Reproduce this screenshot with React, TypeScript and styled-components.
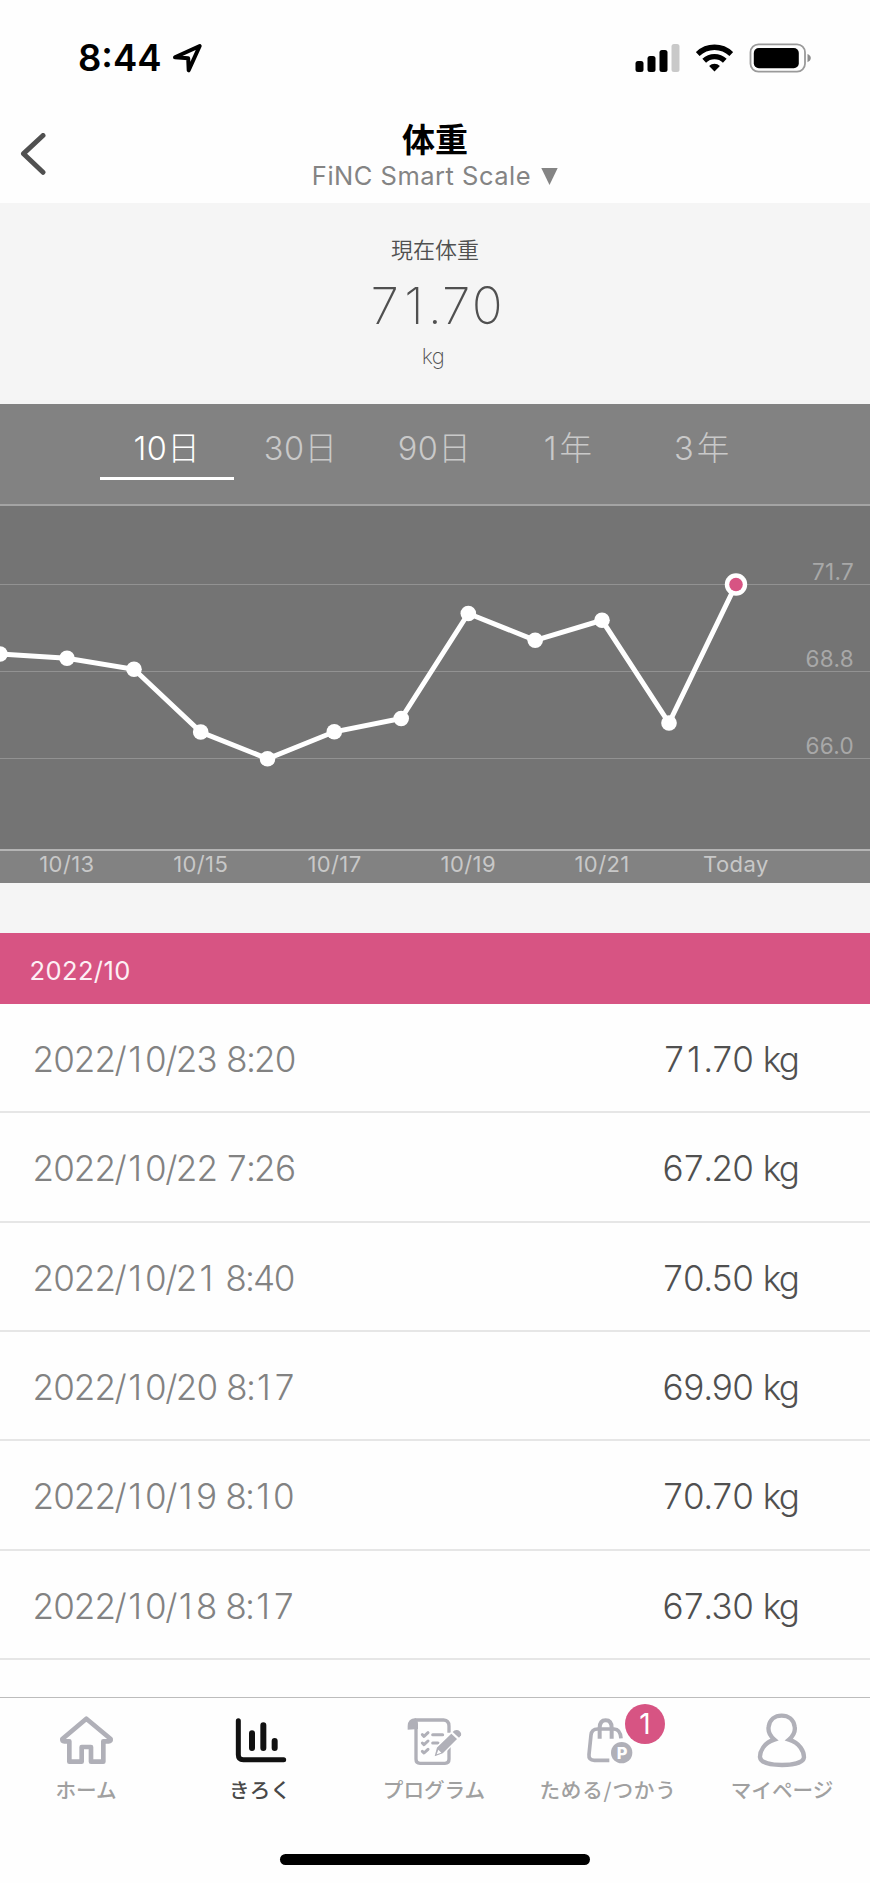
import React from 'react';
import styled, { createGlobalStyle } from 'styled-components';

const PINK = '#d75483';
const ICON_GREY = '#b0b0b8';

const GlobalStyle = createGlobalStyle`
  *, *::before, *::after { box-sizing: border-box; }
  body {
    margin: 0;
    background: #fff;
    font-family: Inter, "Noto Sans CJK JP", sans-serif;
  }
  svg { display: block; flex: none; }
`;

const Screen = styled.div`
  display: flex;
  flex-direction: column;
  width: 870px;
  height: 1883px;
  background: #fefefe;
  overflow: hidden;
`;

/* ---- status bar and title ---- */

const StatusBar = styled.div`
  display: flex;
  justify-content: space-between;
  align-items: center;
  height: 115px;
  padding: 1px 59px 0 78px;
`;

const Clock = styled.div`
  display: flex;
  align-items: center;
  gap: 10px;
  font-size: 36.5px;
  font-weight: 600;
  letter-spacing: 0;
  color: #000;
`;

const StatusIcons = styled.div`
  display: flex;
  align-items: center;
  gap: 16px;
`;

const NavHeader = styled.header`
  display: grid;
  grid-template-columns: 100px 1fr 100px;
  height: 88px;
`;

const BackButton = styled.button`
  display: flex;
  align-items: flex-start;
  padding: 18px 0 0 20px;
  border: 0;
  background: none;
`;

const TitleBlock = styled.div`
  display: flex;
  flex-direction: column;
  align-items: center;
`;

const Title = styled.h1`
  margin: 0;
  padding-top: 6px;
  font-size: 33px;
  font-weight: 600;
  line-height: 38px;
  color: #000;
`;

const Device = styled.div`
  display: flex;
  align-items: center;
  gap: 10px;
  font-size: 25.5px;
  line-height: 34px;
  letter-spacing: 0.5px;
  color: #848484;
`;

/* ---- current weight ---- */

const Summary = styled.section`
  display: flex;
  flex-direction: column;
  align-items: center;
  height: 201px;
  padding-top: 31px;
  background: #f5f5f5;
  color: #505050;
`;

const SummaryLabel = styled.div`
  font-size: 22px;
  font-weight: 350;
  line-height: 32px;
`;

const SummaryValue = styled.div`
  margin-top: 10px;
  font-size: 51px;
  font-weight: 200;
  line-height: 60px;
  font-variant-numeric: tabular-nums;
  letter-spacing: -2px;
`;

const SummaryUnit = styled.div`
  margin-top: 6px;
  padding-right: 4px;
  font-size: 22px;
  font-weight: 200;
  line-height: 28px;
  letter-spacing: -0.5px;
`;

/* ---- period tabs and chart ---- */

const Periods = styled.div`
  display: flex;
  height: 100px;
  padding: 0 101px 0 100px;
  background: #828282;
`;

const Period = styled.button<{ $active?: boolean; $spread?: boolean }>`
  flex: 1;
  height: 76px;
  padding: 17px 0 0;
  border: 0;
  border-bottom: 3px solid ${p => (p.$active ? '#fff' : 'transparent')};
  background: none;
  font: 300 32.5px/56px Inter, "Noto Sans CJK JP", sans-serif;
  letter-spacing: ${p => (p.$spread ? '3px' : '0.5px')};
  text-indent: ${p => (p.$spread ? '2px' : '0')};
  color: ${p => (p.$active ? '#fff' : '#c9c9c9')};
`;

const Plot = styled.div`
  height: 347px;
  background: #747474;
`;

const AxisText = styled.text`
  font: 400 22.5px Inter, sans-serif;
  letter-spacing: 0.3px;
  fill: #a8a8a8;
`;

const Dates = styled.div`
  display: grid;
  grid-template-columns: repeat(6, 133.8px);
  height: 32px;
  background: #828282;
`;

const DateLabel = styled.span`
  font-size: 22px;
  line-height: 27px;
  letter-spacing: 0.4px;
  text-align: center;
  color: #c8c8c8;
`;

/* ---- history ---- */

const MonthHeader = styled.h2`
  display: flex;
  align-items: center;
  height: 71px;
  margin: 50px 0 0;
  padding: 4px 0 0 29.5px;
  background: ${PINK};
  color: #fdf0f5;
  font-size: 25.5px;
  font-weight: 400;
  letter-spacing: 0.4px;
`;

const Gap = styled.div`
  background: #f5f5f5;
  display: flow-root;
`;

const Records = styled.ul`
  flex: 1;
  margin: 0;
  padding: 0;
  list-style: none;
`;

const Record = styled.li`
  display: flex;
  justify-content: space-between;
  align-items: center;
  height: 109.33px;
  padding: 3px 72px 0 32px;
  border-bottom: 2px solid #e6e6e6;
  font-size: 35px;
  font-weight: 300;
  font-variant-numeric: tabular-nums;
  white-space: nowrap;
`;

const RecordDate = styled.span`
  letter-spacing: -2px;
  word-spacing: 1.5px;
  color: #828282;
`;

const RecordValue = styled.span`
  letter-spacing: -1.8px;
  word-spacing: 2.5px;
  color: #505050;
`;

/* A plain "1" without the tabular foot, on the same advance as the other digits. */
const One = styled.span`
  display: inline-block;
  width: 0.565em;
  padding-right: 0.03em;
  font-variant-numeric: normal;
  text-align: center;
`;

/* ---- bottom navigation ---- */

const TabBar = styled.nav`
  display: flex;
  height: 157px;
  border-top: 1px solid #bcbcbc;
`;

const Tab = styled.a<{ $active?: boolean }>`
  flex: 1;
  display: flex;
  flex-direction: column;
  align-items: center;
  padding-top: 14px;
  color: ${p => (p.$active ? '#111' : ICON_GREY)};
`;

const TabLabel = styled.span<{ $active?: boolean; $spread?: boolean }>`
  margin-top: 6px;
  padding-right: 2px;
  font: 500 20.6px/30px "Noto Sans CJK JP", sans-serif;
  letter-spacing: ${p => (p.$spread ? '0.8px' : '0')};
  white-space: nowrap;
  color: ${p => (p.$active ? '#484848' : '#a0a0a0')};
`;

const IconHolder = styled.span`
  position: relative;
`;

const Badge = styled.span`
  position: absolute;
  left: 44px;
  top: -8px;
  width: 40px;
  height: 40px;
  border-radius: 50%;
  background: ${PINK};
  color: #fff;
  font: 400 28px/41px Inter, sans-serif;
  text-align: center;
`;

const HomeIndicator = styled.div`
  width: 310px;
  height: 11px;
  margin: 0 auto 18px;
  border-radius: 6px;
  background: #000;
`;

const LocationIcon = () => (
  <svg width="30" height="30" viewBox="172 43 30 30" fill="none" stroke="#000" strokeWidth="4" strokeLinejoin="round">
    <path d="M175 57.3 L199.7 46 L188.7 70.3 L188.2 58.3 Z" />
  </svg>
);

const SignalIcon = () => (
  <svg width="45" height="30" viewBox="635.5 43 45 30">
    <rect x="636" y="61" width="8" height="11" rx="2.5" />
    <rect x="648" y="56" width="8" height="16" rx="2.5" />
    <rect x="660" y="50" width="8" height="22" rx="2.5" />
    <rect x="672" y="44" width="8" height="28" rx="2.5" fill="#c9c9c9" />
  </svg>
);

const WifiIcon = () => (
  <svg width="37" height="30" viewBox="-18.5 -28.5 37 30" fill="none" stroke="#000" strokeWidth="5.4">
    <path d="M-16.8 -17.4 A24.2 24.2 0 0 1 16.8 -17.4" />
    <path d="M-10.3 -10.8 A15 15 0 0 1 10.3 -10.8" />
    <path d="M-5.4 -5.6 A8 8 0 0 1 5.4 -5.6 L0 0 Z" fill="#000" stroke="none" />
  </svg>
);

const BatteryIcon = () => (
  <svg width="62" height="30" viewBox="749.5 42.5 62 30">
    <rect x="751" y="43.8" width="54.5" height="27.4" rx="8" fill="none" stroke="#9a9a9a" strokeWidth="1.8" />
    <rect x="754.3" y="47.5" width="45" height="20.2" rx="5" />
    <path d="M808 53.5 Q811.3 55 811.3 57.6 Q811.3 60.3 808 61.8 Z" fill="#8c8c8c" />
  </svg>
);

const BackIcon = () => (
  <svg width="26" height="42" viewBox="20 133 26 42" fill="none" stroke="#505050" strokeWidth="5" strokeLinecap="round" strokeLinejoin="round">
    <path d="M43 135.5 L23.5 153.7 L43 172.3" />
  </svg>
);

const HomeIcon = () => (
  <svg width="56" height="56" viewBox="177 215 168 168" fill="none" stroke="currentColor" strokeWidth="14" strokeLinejoin="round">
    <path d="M259 235 L332 296 Q333 303 326 303 H310 V364 H273 V320 H245 V364 H208 V303 H193 Q185 303 187 296 Z" />
  </svg>
);

const ChartIcon = () => (
  <svg width="56" height="56" viewBox="699 215 168 168" fill="none" stroke="currentColor" strokeLinecap="round">
    <path strokeWidth="15" d="M715 241 V343 Q715 358 730 358 H851" />
    <path strokeWidth="18" d="M756 279 V323 M790 255 V323 M824 302 V323" />
  </svg>
);

const ProgramIcon = () => (
  <svg width="56" height="56" viewBox="351 215 168 168" fill="none" stroke="currentColor" strokeLinejoin="round">
    <path strokeWidth="10" d="M374 239 H461 Q477 240 477 257 V277 M477 314 V357 Q477 369 465 369 H390 Q378 369 378 357 V262" />
    <path fill="currentColor" stroke="none" d="M353 268 V257 Q354 234 376 234 Q384 238 384 252 V266 Z" />
    <path strokeWidth="9" strokeLinecap="round" d="M397 283 L402 288 L414 277 M397 308 L402 313 L414 302 M397 333 L402 338 L414 327" />
    <path strokeWidth="9" strokeLinecap="round" d="M428 283 H458 M428 308 H444" />
    <path fill="currentColor" stroke="#fefefe" strokeWidth="4" d="M431 351 L439 321 L484 277 L504 296 L459 341 Z" />
    <path fill="#fefefe" stroke="none" d="M440 342 L445 328 L454 337 Z" />
    <path fill="currentColor" stroke="none" d="M488 275 Q495 266 505 270 Q516 277 513 285 L507 292 Z" />
  </svg>
);

const BagIcon = () => (
  <svg width="56" height="56" viewBox="33 215 168 168" fill="none" stroke="currentColor">
    <path strokeWidth="12" d="M89 295 V263 Q89 240 107 240 Q125 240 125 263 V295" />
    <path strokeWidth="11" d="M118 360 H73 Q55 360 57 342 L63 284 Q65 266 83 266 H132 Q151 267 153 294" />
    <circle cx="155" cy="337" r="32" fill="currentColor" stroke="none" />
    <text x="156" y="355" fill="#fefefe" stroke="none" fontFamily="Inter, sans-serif" fontWeight="800" fontSize="49" textAnchor="middle">P</text>
  </svg>
);

const UserIcon = () => (
  <svg width="56" height="56" viewBox="555 215 168 168" fill="none" stroke="currentColor" strokeWidth="13">
    <path d="M613 298 C598 285 594 270 596 259 C599 238 615 226 635 226 C655 226 671 238 674 259 C676 270 672 285 657 298 C690 308 702 334 702 351 C700 369 665 374 636 374 C607 374 572 369 570 351 C569 334 581 308 613 298 Z" />
  </svg>
);

const POINTS: [number, number][] = [
  [0, 654], [67, 658.3], [134, 669.3], [200.7, 732], [267.5, 758.7], [334.3, 731.8],
  [401.2, 718.5], [468.3, 613.5], [535.2, 640.3], [602, 620.3], [669, 723],
];
const TODAY: [number, number] = [736, 584.5];
const GRID: [number, string][] = [[584.5, '71.7'], [671.5, '68.8'], [758.5, '66.0']];

const WeightChart = () => (
  <svg width="870" height="347" viewBox="0 504 870 347">
    <path d="M0 505 H870" stroke="#a4a4a4" strokeWidth="2" />
    <path d="M0 850 H870" stroke="#b4b4b4" strokeWidth="2" />
    {GRID.map(([y, label]) => (
      <g key={label}>
        <path d={`M0 ${y} H870`} stroke="#929292" strokeWidth="1.2" />
        <AxisText x="854" y={y - 4.5} textAnchor="end">{label}</AxisText>
      </g>
    ))}
    <polyline points={[...POINTS, TODAY].map(p => p.join(',')).join(' ')} fill="none" stroke="#fff" strokeWidth="5" />
    {POINTS.map(([x, y]) => <circle key={x} cx={x} cy={y} r="7.8" fill="#fff" />)}
    <circle cx={TODAY[0]} cy={TODAY[1]} r="11.2" fill="#fff" />
    <circle cx={TODAY[0]} cy={TODAY[1]} r="6.8" fill={PINK} />
  </svg>
);

const Figures = ({ text }: { text: string }) => (
  <>
    {text.split(/(1)/).map((part, i) => (part === '1' ? <One key={i}>1</One> : part))}
  </>
);

const PERIODS = [
  { label: '10日', active: true },
  { label: '30日' },
  { label: '90日' },
  { label: '1年', spread: true },
  { label: '3年', spread: true },
];

const RECORDS = [
  ['2022/10/23 8:20', '71.70 kg'],
  ['2022/10/22 7:26', '67.20 kg'],
  ['2022/10/21 8:40', '70.50 kg'],
  ['2022/10/20 8:17', '69.90 kg'],
  ['2022/10/19 8:10', '70.70 kg'],
  ['2022/10/18 8:17', '67.30 kg'],
];

const TABS = [
  { label: 'ホーム', Icon: HomeIcon },
  { label: 'きろく', Icon: ChartIcon, active: true },
  { label: 'プログラム', Icon: ProgramIcon },
  { label: 'ためる/つかう', Icon: BagIcon, badge: 1, spread: true },
  { label: 'マイページ', Icon: UserIcon },
];

export default function App() {
  return (
    <Screen>
      <GlobalStyle />
      <StatusBar>
        <Clock>8:44<LocationIcon /></Clock>
        <StatusIcons><SignalIcon /><WifiIcon /><BatteryIcon /></StatusIcons>
      </StatusBar>
      <NavHeader>
        <BackButton aria-label="戻る"><BackIcon /></BackButton>
        <TitleBlock>
          <Title>体重</Title>
          <Device>
            FiNC Smart Scale
            <svg width="17" height="17" viewBox="0 0 17 17"><path d="M0.3 0 H16.7 L8.5 17 Z" fill="#848484" /></svg>
          </Device>
        </TitleBlock>
      </NavHeader>
      <Summary>
        <SummaryLabel>現在体重</SummaryLabel>
        <SummaryValue><Figures text="71.70" /></SummaryValue>
        <SummaryUnit>kg</SummaryUnit>
      </Summary>
      <Periods>
        {PERIODS.map(({ label, active, spread }) => (
          <Period key={label} $active={active} $spread={spread}>{label}</Period>
        ))}
      </Periods>
      <Plot><WeightChart /></Plot>
      <Dates>
        {['10/13', '10/15', '10/17', '10/19', '10/21', 'Today'].map(d => <DateLabel key={d}>{d}</DateLabel>)}
      </Dates>
      <Gap><MonthHeader>2022/10</MonthHeader></Gap>
      <Records>
        {RECORDS.map(([date, value]) => (
          <Record key={date}>
            <RecordDate><Figures text={date} /></RecordDate>
            <RecordValue><Figures text={value} /></RecordValue>
          </Record>
        ))}
      </Records>
      <TabBar>
        {TABS.map(({ label, Icon, active, badge, spread }) => (
          <Tab key={label} $active={active}>
            <IconHolder><Icon />{badge && <Badge>{badge}</Badge>}</IconHolder>
            <TabLabel $active={active} $spread={spread}>{label}</TabLabel>
          </Tab>
        ))}
      </TabBar>
      <HomeIndicator />
    </Screen>
  );
}
